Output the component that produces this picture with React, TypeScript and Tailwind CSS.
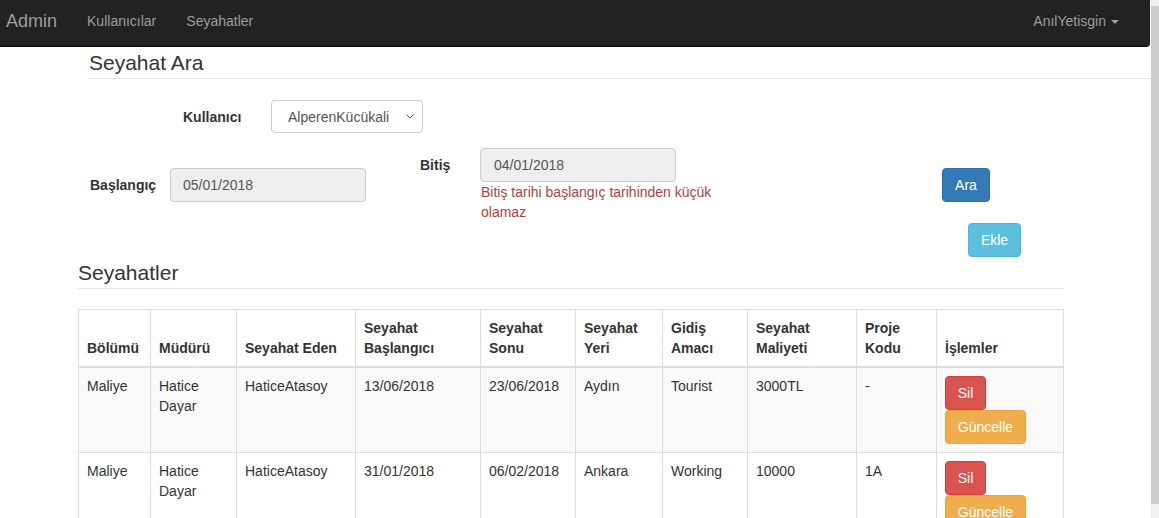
import React from "react";

const rows = [
  {
    bolum: "Maliye",
    mudur: ["Hatice", "Dayar"],
    eden: "HaticeAtasoy",
    bas: "13/06/2018",
    son: "23/06/2018",
    yer: "Aydın",
    amac: "Tourist",
    maliyet: "3000TL",
    kod: "-",
    striped: true,
  },
  {
    bolum: "Maliye",
    mudur: ["Hatice", "Dayar"],
    eden: "HaticeAtasoy",
    bas: "31/01/2018",
    son: "06/02/2018",
    yer: "Ankara",
    amac: "Working",
    maliyet: "10000",
    kod: "1A",
    striped: false,
  },
];

const th =
  "border border-[#ddd] border-b-2 px-[8px] py-[8px] align-bottom text-left font-bold leading-[20px]";
const td = "border border-[#ddd] px-[8px] py-[8px] align-top leading-[20px]";

export default function App() {
  return (
    <div
      className="flex h-[518px] w-[1159px] overflow-hidden bg-white text-[14px] text-[#333]"
      style={{ fontFamily: '"Liberation Sans", Arial, sans-serif' }}
    >
      <div className="flex w-[1151px] flex-col">
        {/* Navbar */}
        <nav className="flex h-[47px] w-[1150px] shrink-0 items-center rounded-br-[4px] border-b border-[#080808] bg-[#222] pb-[4px] text-[#9d9d9d]">
          <span className="ml-[6px] text-[18px] leading-[20px]">Admin</span>
          <span className="ml-[30px] leading-[20px]">Kullanıcılar</span>
          <span className="ml-[30px] leading-[20px]">Seyahatler</span>
          <div className="ml-auto mr-[31px] flex items-center">
            <span className="leading-[20px]">AnılYetisgin</span>
            <span className="ml-[5px] mt-[1px] h-0 w-0 border-l-[4px] border-r-[4px] border-t-[4px] border-l-transparent border-r-transparent border-t-[#9d9d9d]" />
          </div>
        </nav>

        {/* Seyahat Ara */}
        <div className="ml-[89px] mt-[4px] border-b border-[#e5e5e5] pb-[3px]">
          <h3 className="text-[21px] leading-[24px]">Seyahat Ara</h3>
        </div>

        <div className="ml-[183px] mt-[21px] flex items-center">
          <label className="w-[88px] font-bold leading-[20px]">Kullanıcı</label>
          <div className="flex h-[33px] w-[152px] items-center rounded-[4px] border border-[#ccc] bg-white pl-[16px] pr-[8px] text-[#555]">
            <span className="leading-[20px]">AlperenKücükali</span>
            <svg className="ml-auto" width="8" height="5" viewBox="0 0 8 5">
              <path d="M0.5 0.5 L4 4 L7.5 0.5" fill="none" stroke="#555" strokeWidth="1" />
            </svg>
          </div>
        </div>

        <div className="ml-[90px] mt-[15px] flex items-start">
          <div className="mt-[20px] flex items-center">
            <label className="w-[80px] font-bold leading-[20px]">Başlangıç</label>
            <div className="flex h-[34px] w-[196px] items-center rounded-[4px] border border-[#ccc] bg-[#eee] px-[12px] text-[#555]">
              05/01/2018
            </div>
          </div>
          <label className="ml-[54px] mt-[7px] w-[60px] font-bold leading-[20px]">Bitiş</label>
          <div className="w-[262px]">
            <div className="flex h-[34px] w-[196px] items-center rounded-[4px] border border-[#ccc] bg-[#eee] px-[13px] text-[#555]">
              04/01/2018
            </div>
            <div className="w-[250px] pl-[1px] leading-[20px] text-[#a94442]">
              Bitiş tarihi başlangıç tarihinden küçük olamaz
            </div>
          </div>
          <button className="ml-[200px] mt-[20px] flex h-[34px] w-[48px] items-center justify-center rounded-[4px] border border-[#2e6da4] bg-[#337ab7] text-white">
            Ara
          </button>
        </div>

        <div className="ml-[968px] mt-[1px]">
          <button className="flex h-[34px] w-[53px] items-center justify-center rounded-[4px] border border-[#46b8da] bg-[#5bc0de] text-white">
            Ekle
          </button>
        </div>

        {/* Seyahatler */}
        <div className="ml-[78px] mt-[4px] w-[985px] border-b border-[#e5e5e5] pb-[3px]">
          <h3 className="text-[21px] leading-[24px]">Seyahatler</h3>
        </div>

        <table className="ml-[78px] mt-[20px] w-[985px] table-fixed border-collapse border border-[#ddd]">
          <colgroup>
            <col className="w-[72px]" />
            <col className="w-[86px]" />
            <col className="w-[119px]" />
            <col className="w-[125px]" />
            <col className="w-[95px]" />
            <col className="w-[87px]" />
            <col className="w-[85px]" />
            <col className="w-[109px]" />
            <col className="w-[80px]" />
            <col className="w-[127px]" />
          </colgroup>
          <thead>
            <tr className="bg-white">
              <th className={th}>Bölümü</th>
              <th className={th}>Müdürü</th>
              <th className={th}>Seyahat Eden</th>
              <th className={th}>
                Seyahat
                <br />
                Başlangıcı
              </th>
              <th className={th}>
                Seyahat
                <br />
                Sonu
              </th>
              <th className={th}>
                Seyahat
                <br />
                Yeri
              </th>
              <th className={th}>
                Gidiş
                <br />
                Amacı
              </th>
              <th className={th}>
                Seyahat
                <br />
                Maliyeti
              </th>
              <th className={th}>
                Proje
                <br />
                Kodu
              </th>
              <th className={th}>İşlemler</th>
            </tr>
          </thead>
          <tbody>
            {rows.map((r, i) => (
              <tr key={i} className={r.striped ? "bg-[#f9f9f9]" : "bg-white"}>
                <td className={td}>{r.bolum}</td>
                <td className={td}>
                  {r.mudur[0]}
                  <br />
                  {r.mudur[1]}
                </td>
                <td className={td}>{r.eden}</td>
                <td className={td}>{r.bas}</td>
                <td className={td}>{r.son}</td>
                <td className={td}>{r.yer}</td>
                <td className={td}>{r.amac}</td>
                <td className={td}>{r.maliyet}</td>
                <td className={td}>{r.kod}</td>
                <td className={td}>
                  <div className="flex flex-col items-start">
                    <button className="flex h-[34px] w-[41px] items-center justify-center rounded-[4px] border border-[#d43f3a] bg-[#d9534f] text-white">
                      Sil
                    </button>
                    <button className="flex h-[34px] w-[81px] items-center justify-center rounded-[4px] border border-[#eea236] bg-[#f0ad4e] text-white">
                      Güncelle
                    </button>
                  </div>
                </td>
              </tr>
            ))}
          </tbody>
        </table>
      </div>

      {/* scrollbar */}
      <div className="flex w-[8px] flex-col bg-[#f1f1f1]">
        <div className="h-[6px] bg-[#f1f1f1]" />
        <div className="h-[498px] bg-[#cdcdcd]" />
      </div>
    </div>
  );
}
